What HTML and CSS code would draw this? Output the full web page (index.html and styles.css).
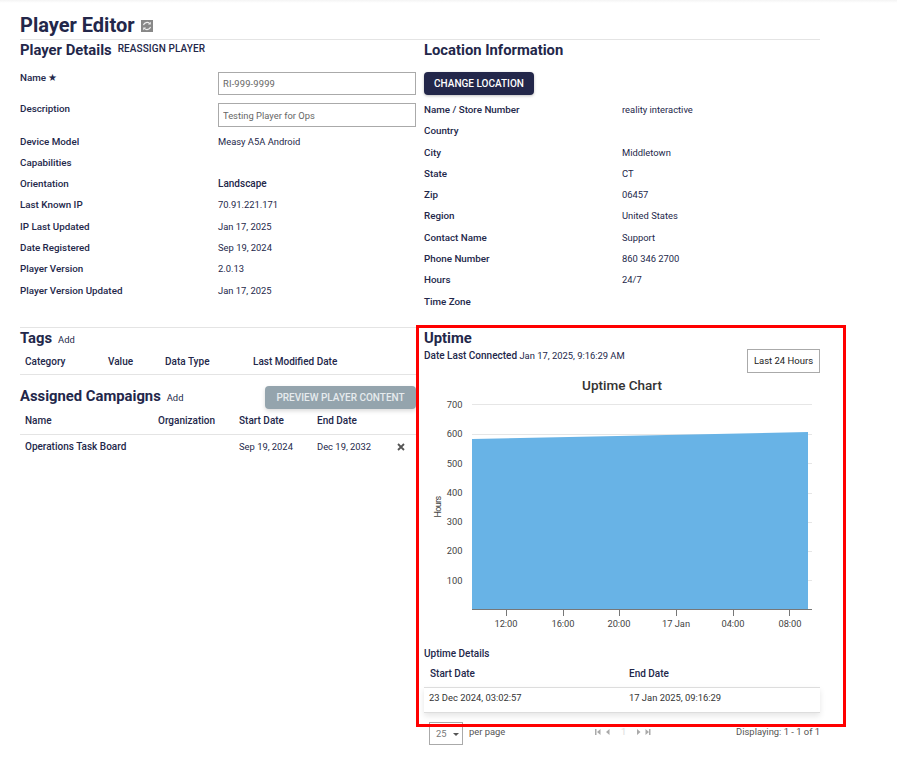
FILE: index.html
```html
<!DOCTYPE html>
<html lang="en">
<head>
  <meta charset="UTF-8">
  <title>Player Editor</title>
  <link rel="stylesheet" href="styles.css">
</head>
<body>
  <div class="topshade"></div>
  <div class="container">
    <div class="title">
      <h1>Player Editor</h1>
      <svg class="refresh" width="12" height="12" viewBox="0 0 12 12">
        <rect width="12" height="12" fill="#888"/>
        <path d="M2.500 5.200a3.600 3.600 0 0 1 6.200-1.500M9.500 6.800a3.600 3.600 0 0 1-6.200 1.500" fill="none" stroke="#eee" stroke-width="1.200"/>
        <path d="M9.800 1.800v2.800H7zM2.200 10.200V7.400H5z" fill="#eee"/>
      </svg>
    </div>
    <div class="columns">
      <div class="left">
        <div class="heading">
          <h2>Player Details</h2>
          <span class="reassign">REASSIGN PLAYER</span>
        </div>
        <div class="details">
          <div class="row row-input">
            <label>Name ★</label>
            <input class="field field-id" value="RI-999-9999">
          </div>
          <div class="row row-input row-desc">
            <label>Description</label>
            <input class="field" value="Testing Player for Ops">
          </div>
          <div class="row"><label>Device Model</label><span>Measy A5A Android</span></div>
          <div class="row"><label>Capabilities</label><span></span></div>
          <div class="row"><label>Orientation</label><span class="strong">Landscape</span></div>
          <div class="row"><label>Last Known IP</label><span>70.91.221.171</span></div>
          <div class="row"><label>IP Last Updated</label><span>Jan 17, 2025</span></div>
          <div class="row"><label>Date Registered</label><span>Sep 19, 2024</span></div>
          <div class="row"><label>Player Version</label><span>2.0.13</span></div>
          <div class="row"><label>Player Version Updated</label><span>Jan 17, 2025</span></div>
        </div>

        <div class="tags">
          <div class="heading">
            <h2>Tags</h2>
            <a class="add">Add</a>
          </div>
          <div class="tag-head">
            <span class="c1">Category</span>
            <span class="c2">Value</span>
            <span class="c3">Data Type</span>
            <span>Last Modified Date</span>
          </div>
        </div>

        <div class="campaigns">
          <div class="heading">
            <h2>Assigned Campaigns</h2>
            <a class="add">Add</a>
            <button class="preview">PREVIEW PLAYER CONTENT</button>
          </div>
          <div class="camp-row camp-head">
            <span>Name</span><span>Organization</span><span>Start Date</span><span>End Date</span>
          </div>
          <div class="camp-row camp-body">
            <span class="strong">Operations Task Board</span><span></span><span>Sep 19, 2024</span><span>Dec 19, 2032</span>
            <svg class="remove" width="8" height="8" viewBox="0 0 8 8"><path d="M1 1l6 6M7 1L1 7" stroke="#555" stroke-width="1.800"/></svg>
          </div>
        </div>
      </div>

      <div class="right">
        <h2 class="loc-title">Location Information</h2>
        <button class="change">CHANGE LOCATION</button>
        <div class="loc-list">
          <div class="row"><label>Name / Store Number</label><span>reality interactive</span></div>
          <div class="row"><label>Country</label><span></span></div>
          <div class="row"><label>City</label><span>Middletown</span></div>
          <div class="row"><label>State</label><span>CT</span></div>
          <div class="row"><label>Zip</label><span>06457</span></div>
          <div class="row"><label>Region</label><span>United States</span></div>
          <div class="row"><label>Contact Name</label><span>Support</span></div>
          <div class="row"><label>Phone Number</label><span>860 346 2700</span></div>
          <div class="row"><label>Hours</label><span>24/7</span></div>
          <div class="row"><label>Time Zone</label><span></span></div>
        </div>

        <div class="uptime">
          <h2>Uptime</h2>
          <div class="uptime-top">
            <p class="connected"><b>Date Last Connected</b> Jan 17, 2025, 9:16:29 AM</p>
            <button class="range">Last 24 Hours</button>
          </div>
          <svg class="chart" width="396" height="265" viewBox="0 0 396 265">
            <text x="198" y="15" class="chart-title" text-anchor="middle">Uptime Chart</text>
            <path d="M48 29.500H388M48 59.500H388M48 88.500H388M48 118.500H388M48 147.500H388M48 176.500H388M48 205.500H388" stroke="#e6e6e6" stroke-width="1"/>
            <g class="axis" text-anchor="end">
              <text x="38.500" y="33">700</text>
              <text x="38.500" y="62">600</text>
              <text x="38.500" y="92">500</text>
              <text x="38.500" y="121">400</text>
              <text x="38.500" y="150">300</text>
              <text x="38.500" y="179">200</text>
              <text x="38.500" y="209">100</text>
            </g>
            <text class="axis-name" transform="translate(17 132) rotate(-90)" text-anchor="middle">Hours</text>
            <path d="M48 64L384 57V234.500H48z" fill="#68b3e6"/>
            <path d="M48 234.500H388" stroke="#777" stroke-width="1"/>
            <path d="M82.500 234v7M139.500 234v7M195.500 234v7M252.500 234v7M309.500 234v7M365.500 234v7" stroke="#777" stroke-width="1"/>
            <g class="axis" text-anchor="middle">
              <text x="82" y="252">12:00</text>
              <text x="139" y="252">16:00</text>
              <text x="195" y="252">20:00</text>
              <text x="252" y="252">17 Jan</text>
              <text x="309" y="252">04:00</text>
              <text x="366" y="252">08:00</text>
            </g>
          </svg>
          <div class="details-title">Uptime Details</div>
          <div class="up-head"><span>Start Date</span><span>End Date</span></div>
          <div class="up-row"><span>23 Dec 2024, 03:02:57</span><span>17 Jan 2025, 09:16:29</span></div>
          <div class="pager">
            <div class="per-page">
              <div class="select">25<i class="caret"></i></div>
              <span class="per-label">per page</span>
            </div>
            <div class="pages">
              <svg width="15" height="8" viewBox="0 0 15 8"><path d="M0 1h1.500v6H0zM5.500 1v6L2 4zM14.500 1v6L11 4z" fill="#aaa"/></svg>
              <span class="page-num">1</span>
              <svg width="14" height="8" viewBox="0 0 14 8"><path d="M0 1v6l3.500-3zM8.500 1v6L12 4zM12 1h1.500v6H12z" fill="#aaa"/></svg>
            </div>
            <span class="count">Displaying: 1 - 1 of 1</span>
          </div>
        </div>
      </div>
    </div>
  </div>
  <div class="highlight"></div>
</body>
</html>
```

FILE: styles.css
```css
body {
  font-family: Roboto, "Liberation Sans", sans-serif;
  font-size: 10px;
  line-height: 14px;
  margin: 0;
  color: #23274a;
  background-color: #fff;
  height: 767px;
  overflow: hidden;
  position: relative;
}
h1, h2, p {
  margin: 0;
}
button {
  font-family: inherit;
  border: none;
}
.topshade {
  height: 3px;
  background: linear-gradient(#f4f4f4, #fff);
}
.container {
  width: 800px;
  margin-left: 20px;
}
.title {
  display: flex;
  align-items: center;
  gap: 6px;
  height: 37px;
  padding-top: 8px;
  box-sizing: border-box;
  border-bottom: 1px solid #e4e4e4;
}
.title h1 {
  font-size: 20px;
  line-height: 24px;
  font-weight: 700;
}
.refresh {
  margin-top: 1px;
}
.columns {
  display: grid;
  grid-template-columns: 396px 396px;
  column-gap: 8px;
}
.heading {
  display: flex;
  align-items: baseline;
}
h2 {
  font-size: 14.800px;
  line-height: 20px;
  font-weight: 700;
}
.reassign {
  align-self: flex-start;
  line-height: 18px;
  font-weight: 500;
  margin-left: 6px;
  letter-spacing: 0.1px;
}
label {
  font-size: 9.800px;
  font-weight: 500;
}
.row span {
  font-size: 9.400px;
}
.row span.strong, .strong {
  font-size: 10px;
  font-weight: 500;
}
.details {
  margin-top: 13px;
}
.row {
  display: grid;
  grid-template-columns: 198px 1fr;
  height: 21.300px;
  align-items: start;
}
.row-input {
  height: 31px;
}
.row-desc {
  height: 30.500px;
}
.field {
  width: 198px;
  height: 23px;
  box-sizing: border-box;
  border: 1px solid #aaa;
  padding: 0 4px;
  font-family: inherit;
  font-size: 9.400px;
  color: #666;
  margin-top: -1px;
}
.field-id {
  letter-spacing: 0.150px;
}
.row-desc .field {
  height: 24px;
}
.row-input label {
  margin-top: -2px;
}
.tags {
  margin-top: 22px;
  border-top: 1px solid #e4e4e4;
}
.add {
  margin-left: 6px;
  font-size: 9.400px;
}
.tag-head {
  display: flex;
  font-weight: 500;
  padding: 7px 0 5px 5px;
  border-bottom: 1px solid #e4e4e4;
}
.tag-head .c1 {
  width: 83px;
}
.tag-head .c2 {
  width: 57px;
}
.tag-head .c3 {
  width: 88px;
}
.campaigns {
  margin-top: 11px;
}
.campaigns .heading {
  height: 24px;
}
.preview {
  margin-left: auto;
  width: 151px;
  height: 23px;
  background-color: #94a4ad;
  color: #e6ebee;
  font-size: 10px;
  font-weight: 500;
  border-radius: 4px;
  box-shadow: 0 2px 4px rgba(0,0,0,0.15);
}
.camp-row {
  display: grid;
  grid-template-columns: 133px 81px 78px 1fr;
  padding-left: 5px;
  position: relative;
}
.camp-head {
  font-weight: 500;
  height: 25px;
  padding-top: 4px;
  box-sizing: border-box;
  border-bottom: 1px solid #e4e4e4;
}
.camp-body {
  padding-top: 5px;
  font-size: 9.400px;
}
.remove {
  position: absolute;
  left: 377px;
  top: 8px;
}
.loc-title {
  line-height: 20px;
}
.change {
  display: block;
  margin-top: 12px;
  width: 110px;
  height: 23px;
  background-color: #23274a;
  color: #fff;
  font-size: 10px;
  font-weight: 500;
  border-radius: 4px;
  box-shadow: 0 1px 3px rgba(0,0,0,0.25);
}
.loc-list {
  margin-top: 8px;
}
.uptime {
  margin-top: 12px;
}
.uptime-top {
  display: flex;
  justify-content: space-between;
  align-items: flex-start;
  height: 27px;
}
.connected {
  margin-top: 1px;
  font-size: 9.400px;
}
.connected b {
  font-size: 10px;
  font-weight: 500;
}
.range {
  width: 73px;
  height: 24px;
  margin-top: 1px;
  padding: 0;
  background-color: #fff;
  border: 1px solid #aaa;
  color: #222;
  font-size: 9.500px;
  white-space: nowrap;
}
.chart {
  display: block;
}
.chart text {
  font-family: Roboto, "Liberation Sans", sans-serif;
}
.chart-title {
  font-size: 13.500px;
  font-weight: 500;
  fill: #333;
}
.axis text {
  font-size: 9.300px;
  fill: #444;
}
.axis-name {
  font-size: 9px;
  fill: #444;
  letter-spacing: -0.600px;
}
.details-title {
  margin-top: 7px;
  font-weight: 500;
}
.up-head {
  display: grid;
  grid-template-columns: 199px 1fr;
  padding-left: 6px;
  margin-top: 6px;
  font-weight: 500;
  height: 20px;
}
.up-row {
  display: grid;
  grid-template-columns: 200px 1fr;
  padding: 0 0 3px 5px;
  height: 21px;
  align-items: center;
  color: #333;
  font-size: 9.400px;
  border-top: 1px solid #ddd;
  border-bottom: 1px solid #ddd;
  box-shadow: 0 3px 6px rgba(0,0,0,0.1);
}
.pager {
  display: flex;
  align-items: flex-start;
  margin-top: 9px;
  padding-left: 5px;
  color: #555;
  font-size: 9.400px;
}
.per-page {
  display: flex;
  gap: 6px;
  align-items: flex-start;
  width: 166px;
}
.per-label {
  margin-top: 3px;
}
.select {
  width: 34px;
  height: 23px;
  box-sizing: border-box;
  border: 1px solid #aaa;
  padding: 4px 0 0 6px;
  position: relative;
  color: #777;
}
.caret {
  position: absolute;
  right: 3px;
  top: 10px;
  border-left: 3.500px solid transparent;
  border-right: 3.500px solid transparent;
  border-top: 3.500px solid #555;
}
.pages {
  display: flex;
  align-items: center;
  gap: 11px;
  margin-top: 3px;
}
.page-num {
  width: 5px;
  color: #ddd;
}
.count {
  margin-left: auto;
  margin-top: 3px;
}
.highlight {
  position: absolute;
  left: 416px;
  top: 325px;
  width: 424px;
  height: 396px;
  border: 3px solid #f00;
}
```
